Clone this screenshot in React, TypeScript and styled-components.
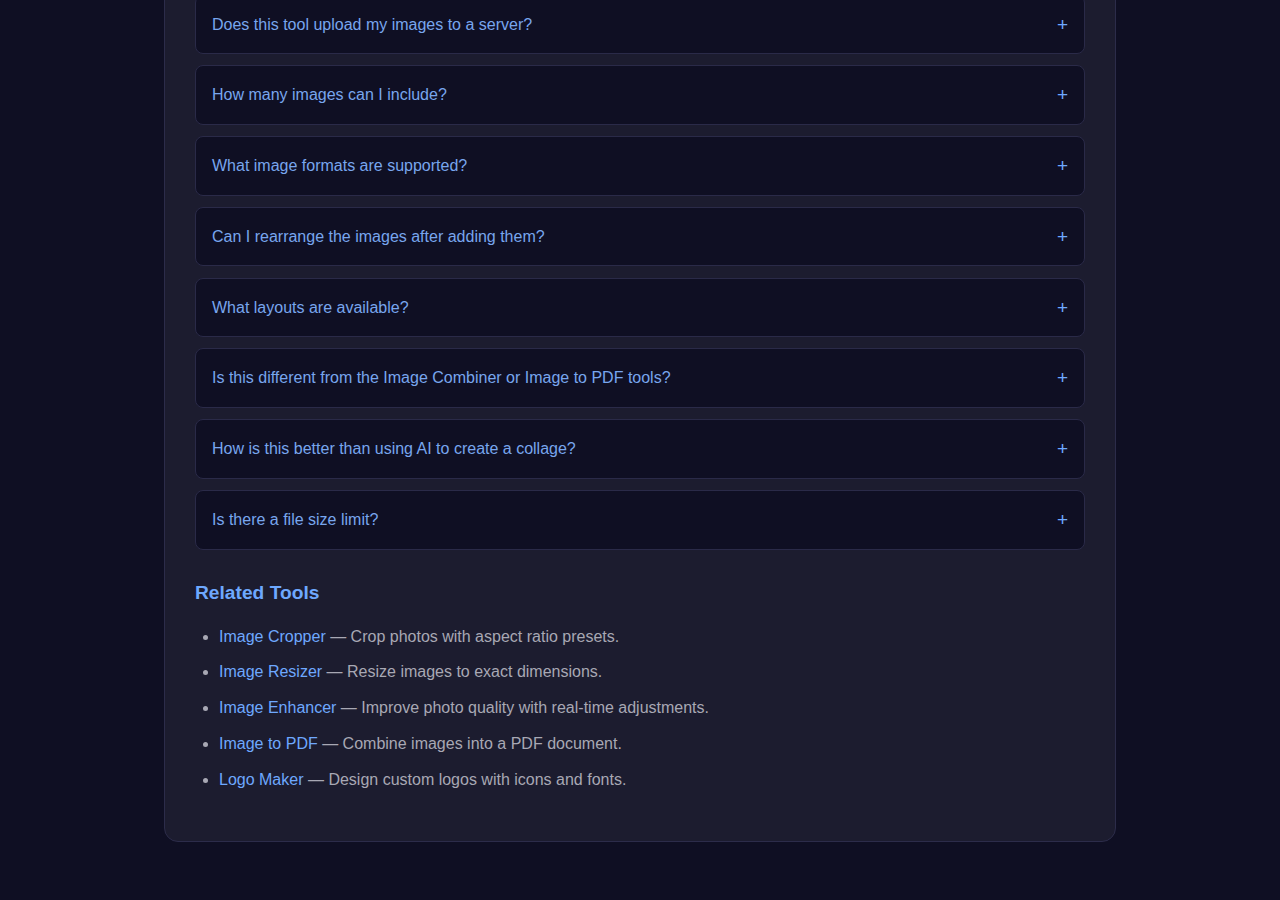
import { createGlobalStyle, styled } from "styled-components";

const GlobalStyle = createGlobalStyle`
    html, body {
        margin: 0;
        padding: 0;
        background-color: #0f0f23;
        font-family: "Liberation Sans", Arial, sans-serif;
    }
    * {
        box-sizing: border-box;
    }
`;

const Page = styled.div`
    display: flex;
    justify-content: center;
    padding-bottom: 58px;
`;
const Card = styled.section`
    width: 952px;
    margin-top: -36.5px; // page is scrolled down, the top of the card is out of view
    padding: 30px 30px 39px;
    background-color: #1c1c2f;
    border: 1px solid #2c2c4a;
    border-radius: 14px;
`;
const FaqList = styled.div`
    display: flex;
    flex-direction: column;
    gap: 11.2px;
`;
const FaqItem = styled.div`
    background-color: #0f0f23;
    border: 1px solid #2a2a48;
    border-radius: 8px;
`;
const Question = styled.button`
    display: flex;
    justify-content: space-between;
    align-items: center;
    width: 100%;
    padding: 16px;
    border: none;
    background: none;
    font-family: inherit;
    font-size: 16px;
    line-height: 25.6px;
    color: #78a6ee;
    text-align: left;
    cursor: pointer;
`;
const Plus = styled.span`
    font-size: 19px;
    line-height: 25.6px;
    color: #6ea8fe;
`;
const Heading = styled.h3`
    margin: 32px 0 20px;
    font-size: 19.2px;
    font-weight: 700;
    line-height: 22px;
    color: #6ea8fe;
`;
const ToolList = styled.ul`
    margin: 0;
    padding-left: 24px;
    color: #a8a8b4;
`;
const ToolItem = styled.li`
    font-size: 16px;
    line-height: 25.6px;
    margin-bottom: 10.2px;
    &::marker {
        color: #a8a8b4;
    }
`;
const ToolLink = styled.a`
    color: #6ea8fe;
    text-decoration: none;
`;

const questions = [
    "Does this tool upload my images to a server?",
    "How many images can I include?",
    "What image formats are supported?",
    "Can I rearrange the images after adding them?",
    "What layouts are available?",
    "Is this different from the Image Combiner or Image to PDF tools?",
    "How is this better than using AI to create a collage?",
    "Is there a file size limit?",
];

const tools = [
    { name: "Image Cropper", desc: "Crop photos with aspect ratio presets." },
    { name: "Image Resizer", desc: "Resize images to exact dimensions." },
    { name: "Image Enhancer", desc: "Improve photo quality with real-time adjustments." },
    { name: "Image to PDF", desc: "Combine images into a PDF document." },
    { name: "Logo Maker", desc: "Design custom logos with icons and fonts." },
];

function App() {
    return (
        <>
            <GlobalStyle />
            <Page>
                <Card>
                    <FaqList>
                        {questions.map((q) => (
                            <FaqItem key={q}>
                                <Question type="button">
                                    <span>{q}</span>
                                    <Plus>+</Plus>
                                </Question>
                            </FaqItem>
                        ))}
                    </FaqList>
                    <Heading>Related Tools</Heading>
                    <ToolList>
                        {tools.map((t) => (
                            <ToolItem key={t.name}>
                                <ToolLink href="#">{t.name}</ToolLink> — {t.desc}
                            </ToolItem>
                        ))}
                    </ToolList>
                </Card>
            </Page>
        </>
    );
}

export default App;
